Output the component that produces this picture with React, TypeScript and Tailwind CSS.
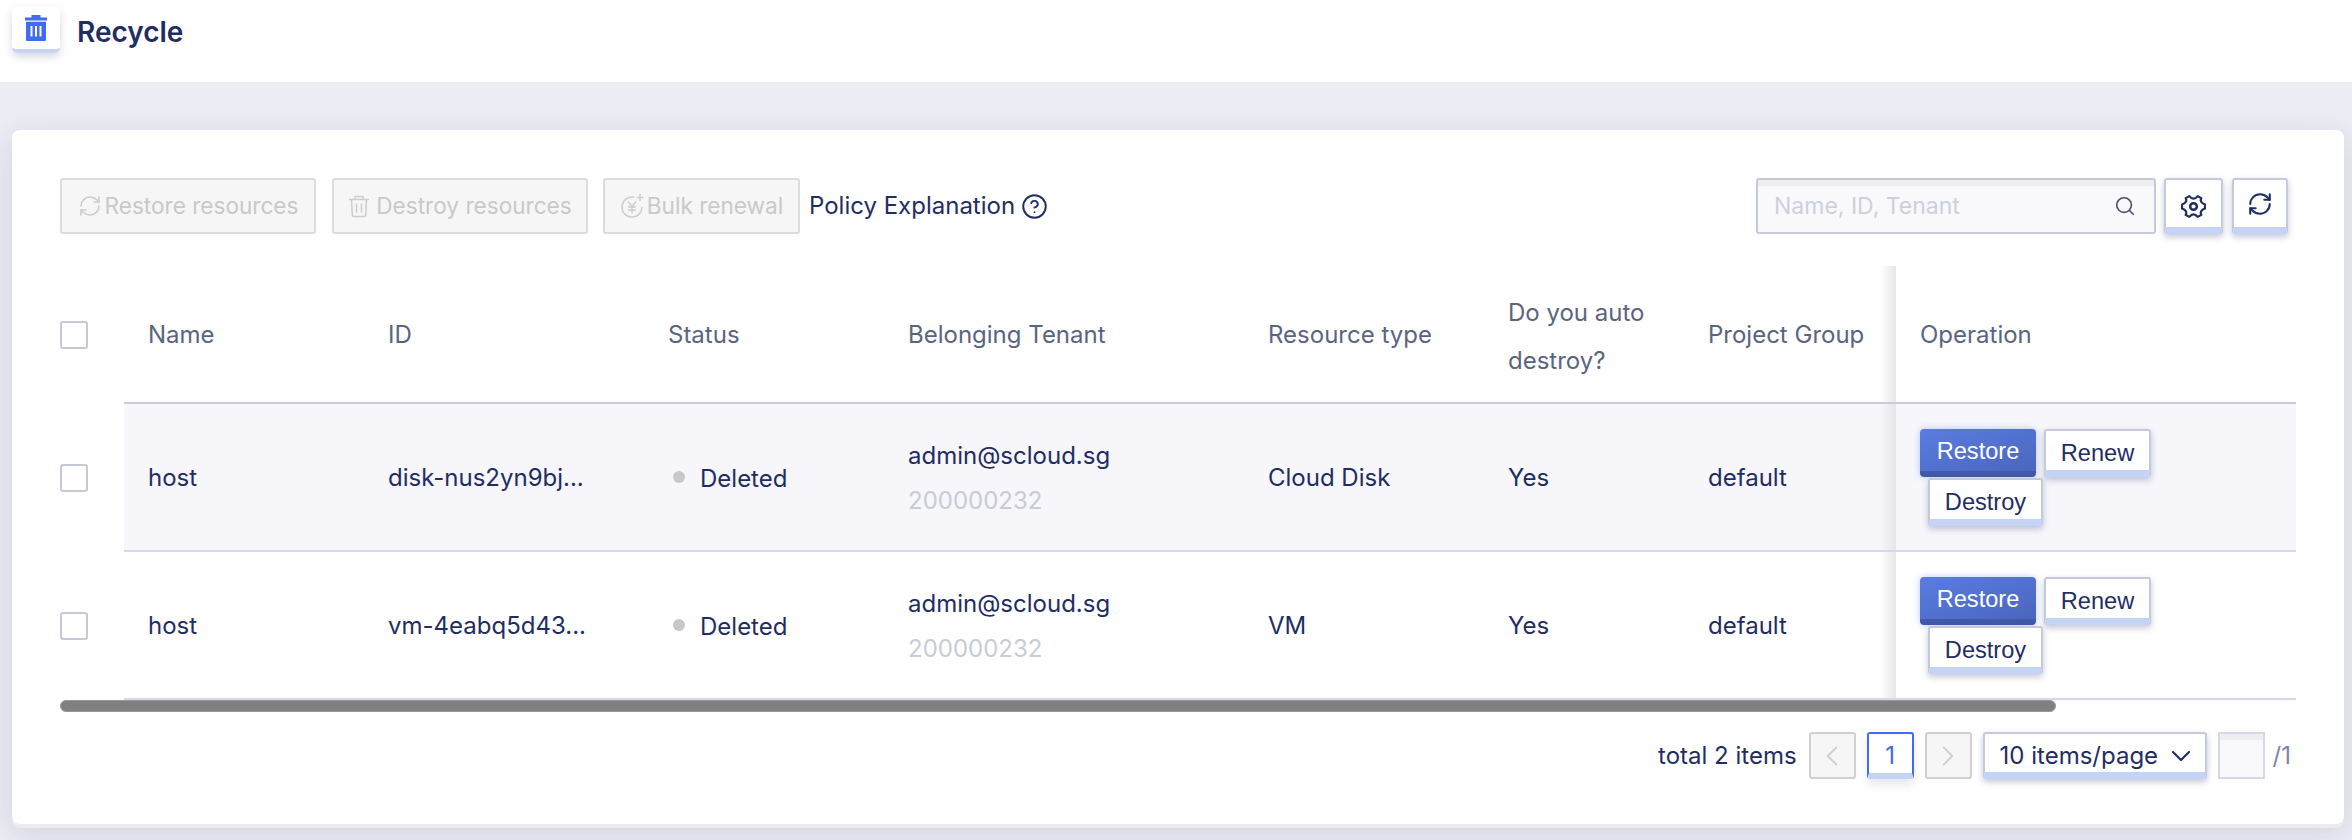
import { RefreshCw, Search, CircleHelp, ChevronDown, ChevronLeft, ChevronRight } from "lucide-react";

const cols = ["w-[240px]", "w-[280px]", "w-[240px]", "w-[360px]", "w-[240px]", "w-[200px]", "w-[212px]"];

function TrashFill() {
  return (
    <svg width="22" height="26" viewBox="0 0 22 26" fill="#3f6bf5">
      <path d="M6.500 0h9v2.500H22v3H0v-3h6.500z" />
      <path fillRule="evenodd" d="M1 6.800h20v18a1.200 1.200 0 0 1-1.200 1.200H2.200A1.200 1.200 0 0 1 1 24.800zM5.500 11v10.500h2V11zm4.500 0v10.500h2V11zm4.500 0v10.500h2V11z" />
    </svg>
  );
}

function TrashLine() {
  return (
    <svg width="22" height="24" viewBox="0 0 22 24" fill="none" stroke="#cdcdcd" strokeWidth="1.500" className="mr-[3px]">
      <path d="M1 5.500h20M7 5.500V2.500h8v3M3.500 5.500l.8 15.500a1.500 1.500 0 0 0 1.500 1.500h10.400a1.500 1.500 0 0 0 1.500-1.500l.8-15.500M8.500 9.500v9M13.500 9.500v9" />
    </svg>
  );
}

function YenPlus() {
  return (
    <svg width="24" height="26" viewBox="0 0 24 26" fill="none" stroke="#cdcdcd" strokeWidth="1.500">
      <path d="M14 4.300A10 10 0 1 0 22 14" />
      <path d="M8 8.500 12 13.500l4-5M12 13.500v7M8 14h8M8 17h8M20 1v7M16.500 4.500h7" />
    </svg>
  );
}

function Gear() {
  return (
    <svg width="25" height="25" viewBox="0 0 24 24" fill="none" stroke="#1f2d63" strokeWidth="2.100" strokeLinejoin="round">
      <path d="M8 2Q12 7 16 2L19.500 4Q17.500 8 23 10V14Q17.500 16 19.500 20L16 22Q12 17 8 22L4.500 20Q6.500 16 1 14V10Q6.500 8 4.500 4Z" />
      <circle cx="12" cy="12" r="3.200" strokeWidth="2.400" />
    </svg>
  );
}

function DisabledBtn({ icon, label, w }: { icon: React.ReactNode; label: string; w: string }) {
  return (
    <div className={`${w} h-[56px] flex items-center justify-center gap-[3px] rounded-[3px] border-2 border-[#dcdcdc] bg-[#f6f6f6] text-[#c9c9c9] text-[22.6px]`}>
      {icon}
      <span>{label}</span>
    </div>
  );
}

function WhiteBtn({ label, w }: { label: string; w: string }) {
  return (
    <div className={`${w} h-[48px] pt-[8px] flex items-center justify-center rounded-[3px] border-2 border-[#c5c9dc] border-b-[7px] [border-bottom-color:#c5d3f6] bg-white text-[#1f2d63] text-[23.6px] shadow-[0_3px_6px_rgba(60,70,120,0.3)] [font-family:'Liberation_Sans',sans-serif]`}>
      {label}
    </div>
  );
}

function Ops() {
  return (
    <div className="w-[300px] flex flex-wrap gap-x-[8px] gap-y-[1px]">
      <div className="w-[116px] h-[48px] pt-[5px] flex items-center justify-center rounded-[4px] border-b-[6px] border-[#4059a8] bg-gradient-to-br from-[#5a7de2] to-[#4a66bd] text-white text-[23.6px] shadow-[0_0_6px_rgba(80,120,240,0.4)] [font-family:'Liberation_Sans',sans-serif]">
        Restore
      </div>
      <WhiteBtn label="Renew" w="w-[107px]" />
      <div className="ml-[8px]">
        <WhiteBtn label="Destroy" w="w-[115px]" />
      </div>
    </div>
  );
}

function Row({ id, tenant, type, shaded }: { id: string; tenant: string; type: string; shaded: boolean }) {
  return (
    <div className="flex h-[148px]">
      <div className="w-[64px] flex items-center">
        <div className="w-[28px] h-[28px] rounded-[3px] border-2 border-[#c5c8da] bg-white" />
      </div>
      <div className={`flex flex-1 items-center border-b-2 border-[#d5d7ea] ${shaded ? "bg-[#f6f6fb]" : "bg-white"}`}>
        <div className={`${cols[0]} pl-[24px] pt-[2px]`}>host</div>
        <div className={`${cols[1]} pl-[24px] pt-[2px]`}>{id}</div>
        <div className={`${cols[2]} pl-[29px] flex items-center`}>
          <span className="w-[12px] h-[12px] rounded-full bg-[#c8c8c8] mr-[15px]" />
          <span className="pt-[4px]">Deleted</span>
        </div>
        <div className={`${cols[3]} pl-[24px]`}>
          <div className="leading-[45px] pt-[1px]">{tenant}</div>
          <div className="leading-[45px] text-[#c9cbd6]">200000232</div>
        </div>
        <div className={`${cols[4]} pl-[24px] pt-[2px]`}>{type}</div>
        <div className={`${cols[5]} pl-[24px] pt-[2px]`}>Yes</div>
        <div className={`${cols[6]} pl-[24px] pt-[2px]`}>default</div>
        <div className="relative h-full flex-1 pl-[24px] flex items-center">
          <div className="absolute top-0 bottom-0 left-[-16px] w-[16px] bg-gradient-to-r from-transparent to-[#e6e6e9]" />
          <Ops />
        </div>
      </div>
    </div>
  );
}

export default function App() {
  return (
    <div className="h-[840px] w-[2352px] overflow-hidden bg-[#ebecf4] text-[#1f2d63] text-[24px] [font-family:Inter,sans-serif]">
      <header className="h-[82px] bg-white flex items-start pl-[12px] pt-[6px]">
        <div className="w-[48px] h-[47px] flex items-center justify-center rounded-[6px] border-b-[4px] border-[#c5d3f6] bg-white shadow-[0_4px_8px_rgba(60,70,120,0.2)]">
          <TrashFill />
        </div>
        <h1 className="ml-[17px] mt-[10px] text-[28px] font-semibold leading-[32px]">Recycle</h1>
      </header>
      <main className="pt-[48px] pl-[12px] pr-[8px]">
        <section className="h-[694px] rounded-[8px] bg-white pt-[48px] pl-[48px] pr-[48px] shadow-[0_4px_0_#ececee,0_8px_30px_rgba(40,45,80,0.14)]">
          <div className="flex items-center h-[56px]">
            <DisabledBtn w="w-[256px]" label="Restore resources" icon={<RefreshCw size={24} color="#cdcdcd" strokeWidth={1.6} />} />
            <div className="ml-[16px]">
              <DisabledBtn w="w-[256px]" label="Destroy resources" icon={<TrashLine />} />
            </div>
            <div className="ml-[15px]">
              <DisabledBtn w="w-[197px]" label="Bulk renewal" icon={<YenPlus />} />
            </div>
            <span className="ml-[9px]">Policy Explanation</span>
            <CircleHelp size={27} strokeWidth={1.7} className="ml-[6px]" />
            <div className="ml-auto w-[400px] h-[56px] flex items-center justify-between pl-[16px] pr-[18px] rounded-[3px] border-2 border-[#c5c9dc] bg-[#f9f9fc] text-[#cdd0dc] text-[23px] shadow-[inset_0_6px_0_#eeeef2]">
              <span>Name, ID, Tenant</span>
              <Search size={22} color="#4a5270" strokeWidth={1.8} />
            </div>
            <div className="ml-[8px] w-[59px] h-[56px] pt-[6px] flex items-center justify-center rounded-[3px] border-2 border-[#c5c9dc] border-b-[7px] [border-bottom-color:#c5d3f6] bg-white shadow-[0_3px_6px_rgba(60,70,120,0.3)]">
              <Gear />
            </div>
            <div className="ml-[9px] mr-[8px] w-[56px] h-[56px] flex items-center justify-center rounded-[3px] border-2 border-[#c5c9dc] border-b-[7px] [border-bottom-color:#c5d3f6] bg-white shadow-[0_3px_6px_rgba(60,70,120,0.3)]">
              <RefreshCw size={26} strokeWidth={1.9} />
            </div>
          </div>

          <div className="mt-[32px] w-[2236px]">
            <div className="flex h-[138px]">
              <div className="w-[64px] flex items-center">
                <div className="w-[28px] h-[28px] rounded-[3px] border-2 border-[#c5c8da] bg-white" />
              </div>
              <div className="flex flex-1 items-center border-b-2 border-[#c8cbdc] text-[#5a6480]">
                <div className={`${cols[0]} pl-[24px] pt-[2px]`}>Name</div>
                <div className={`${cols[1]} pl-[24px] pt-[2px]`}>ID</div>
                <div className={`${cols[2]} pl-[24px] pt-[2px]`}>Status</div>
                <div className={`${cols[3]} pl-[24px] pt-[2px]`}>Belonging Tenant</div>
                <div className={`${cols[4]} pl-[24px] pt-[2px]`}>Resource type</div>
                <div className={`${cols[5]} pl-[24px] pt-[6px] leading-[48px]`}>Do you auto<br />destroy?</div>
                <div className={`${cols[6]} pl-[24px] pt-[2px]`}>Project Group</div>
                <div className="relative h-full flex-1 pl-[24px] pt-[2px] flex items-center">
                  <div className="absolute top-0 bottom-0 left-[-16px] w-[16px] bg-gradient-to-r from-transparent to-[#e6e6e9]" />
                  Operation
                </div>
              </div>
            </div>
            <Row id="disk-nus2yn9bj..." tenant="admin@scloud.sg" type="Cloud Disk" shaded />
            <Row id="vm-4eabq5d43..." tenant="admin@scloud.sg" type="VM" shaded={false} />
            <div className="w-[1996px] h-[12px] rounded-full bg-[#808080] border border-[#999999]" />
            <div className="mt-[20px] flex items-center justify-end h-[47px]">
              <span className="mr-[12px]">total 2 items</span>
              <div className="w-[47px] h-[47px] flex items-center justify-center rounded-[3px] border-2 border-[#d0d0d0] bg-[#f6f6f6]">
                <ChevronLeft size={34} color="#cfcfcf" strokeWidth={1.3} />
              </div>
              <div className="ml-[11px] w-[47px] h-[47px] pt-[5px] flex items-center justify-center rounded-[3px] border-2 border-[#3f6bf5] border-b-[6px] [border-bottom-color:#c5d3f6] bg-white text-[#3f6bf5] shadow-[0_6px_10px_rgba(60,70,120,0.12)]">
                1
              </div>
              <div className="ml-[11px] w-[47px] h-[47px] flex items-center justify-center rounded-[3px] border-2 border-[#d0d0d0] bg-[#f6f6f6]">
                <ChevronRight size={34} color="#cfcfcf" strokeWidth={1.3} />
              </div>
              <div className="ml-[11px] w-[224px] h-[47px] pt-[5px] flex items-center justify-between pl-[15px] pr-[8px] rounded-[3px] border-2 border-[#c5c9dc] border-b-[7px] [border-bottom-color:#c5d3f6] bg-white shadow-[0_3px_6px_rgba(60,70,120,0.3)]">
                <span>10 items/page</span>
                <ChevronDown size={32} strokeWidth={1.6} />
              </div>
              <div className="ml-[11px] w-[47px] h-[47px] border-2 border-[#d5d7ea] bg-[#f9f9fc] shadow-[inset_0_6px_0_#eeeef2]" />
              <span className="ml-[8px] mr-[5px] text-[#7d86a3]">/1</span>
            </div>
          </div>
        </section>
      </main>
    </div>
  );
}
